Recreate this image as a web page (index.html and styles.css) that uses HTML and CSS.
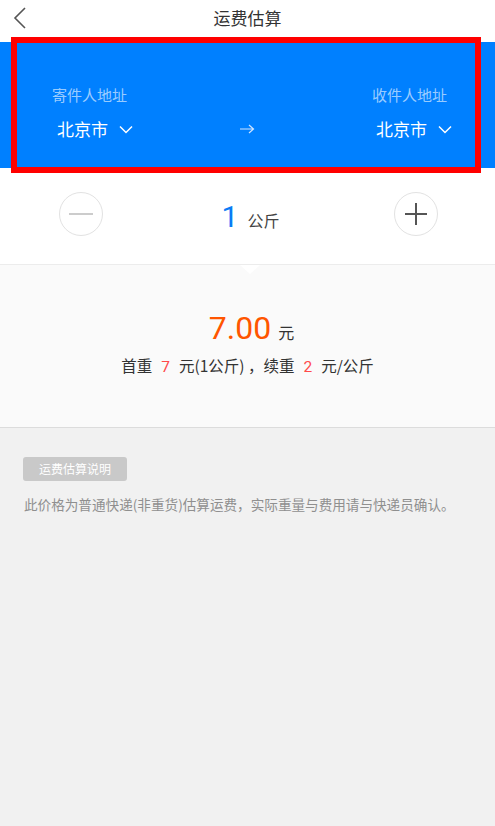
FILE: index.html
```html
<!DOCTYPE html>
<html lang="zh">
<head>
<meta charset="utf-8">
<link rel="stylesheet" href="styles.css">
</head>
<body>
<div class="page">
  <header class="topbar">
    <svg class="back" width="14" height="22" viewBox="0 0 14 22"><path d="M12 1 L2 11 L12 21" fill="none" stroke="#555" stroke-width="1.6"/></svg>
    <div class="title">运费估算</div>
  </header>
  <section class="route">
    <div class="route-inner">
      <div class="addr left">
        <div class="lbl">寄件人地址</div>
        <div class="city">北京市<svg class="chev" width="14" height="9" viewBox="0 0 14 9"><path d="M1 1.5 L7 7.5 L13 1.5" fill="none" stroke="#fff" stroke-width="1.5"/></svg></div>
      </div>
      <div class="arrow"><svg width="15" height="10" viewBox="0 0 15 10"><path d="M0 5 H13 M9 1 L13.5 5 L9 9" fill="none" stroke="#cfe4ff" stroke-width="1.2"/></svg></div>
      <div class="addr right">
        <div class="lbl">收件人地址</div>
        <div class="city">北京市<svg class="chev" width="14" height="9" viewBox="0 0 14 9"><path d="M1 1.5 L7 7.5 L13 1.5" fill="none" stroke="#fff" stroke-width="1.5"/></svg></div>
      </div>
    </div>
    <div class="highlight"></div>
  </section>
  <section class="weight">
    <div class="circle"><svg width="24" height="2" viewBox="0 0 24 2"><path d="M0 1 H24" stroke="#ccc" stroke-width="2"/></svg></div>
    <div class="qty"><span class="num">1</span><span class="unit">公斤</span></div>
    <div class="circle"><svg width="22" height="22" viewBox="0 0 22 22"><path d="M0 11 H22 M11 0 V22" stroke="#555" stroke-width="2"/></svg></div>
    <span class="notch"></span>
  </section>
  <section class="result">
    <div class="price"><span class="amt">7.00</span><span class="yuan">元</span></div>
    <div class="rule">首重<span class="red">7</span>元(1公斤) ，续重<span class="red">2</span>元/公斤</div>
  </section>
  <section class="note">
    <span class="badge">运费估算说明</span>
    <p class="desc">此价格为普通快递(非重货)估算运费，实际重量与费用请与快递员确认。</p>
  </section>
</div>
</body>
</html>
```
FILE: styles.css
```css
* { box-sizing: border-box; margin: 0; padding: 0; }
html, body { width: 495px; height: 826px; }
body {
  font-family: "Noto Sans CJK SC", "Roboto", "Liberation Sans", sans-serif;
  background: #f1f1f1;
  color: #333;
}
.page { width: 495px; min-height: 826px; display: flex; flex-direction: column; }
.topbar {
  height: 42px;
  background: #fff;
  display: flex;
  align-items: center;
  justify-content: center;
  position: relative;
}
.back { position: absolute; left: 13px; top: 7px; }
.title { font-size: 17px; color: #333; line-height: 1; margin-top: -7px; }
.route {
  height: 126px;
  background: #0080ff;
  position: relative;
  z-index: 2;
}
.route-inner {
  display: flex;
  justify-content: space-between;
  align-items: flex-start;
  padding: 44px 48px 0 52px;
}
.addr { display: flex; flex-direction: column; }
.addr.right { align-items: flex-end; }
.lbl { font-size: 15px; color: rgba(255,255,255,0.62); line-height: 18px; }
.city {
  margin-top: 15px;
  font-size: 17px;
  color: #fff;
  line-height: 20px;
  display: flex;
  align-items: center;
  padding-left: 5px;
}
.chev { margin-left: 11px; }
.addr.right .city { padding-left: 0; margin-right: -5px; }
.arrow { margin-top: 38px; margin-left: -10px; line-height: 0; }
.highlight {
  position: absolute;
  left: 11px; top: -5px;
  width: 470px; height: 136px;
  border: 6px solid #ff0000;
  pointer-events: none;
}
.weight {
  height: 97px;
  background: #fff;
  display: flex;
  align-items: center;
  justify-content: space-between;
  padding: 0 57px 0 59px;
  position: relative;
  border-bottom: 1px solid #ececec;
}
.circle {
  width: 44px; height: 44px;
  border: 1px solid #e2e2e2;
  border-radius: 50%;
  display: flex; align-items: center; justify-content: center;
  margin-top: -5px;
}
.qty { display: flex; align-items: baseline; margin-left: 4px; margin-top: 2px; }
.num { font-family: "Roboto", sans-serif; font-size: 30px; color: #0a7cf5; line-height: 1; }
.unit { font-size: 16px; color: #444; margin-left: 9px; }
.notch {
  position: absolute;
  left: 240px; bottom: -10px;
  width: 0; height: 0;
  border-left: 10px solid transparent;
  border-right: 10px solid transparent;
  border-top: 9px solid #fff;
}
.notch::before {
  content: "";
  position: absolute;
  left: -11px; top: -9px;
  border-left: 11px solid transparent;
  border-right: 11px solid transparent;
  border-top: 10px solid #ececec;
  z-index: -1;
}
.result {
  height: 163px;
  background: #fafafa;
  border-bottom: 1px solid #dcdcdc;
  display: flex;
  flex-direction: column;
  align-items: center;
  padding-top: 44px;
}
.price { display: flex; align-items: baseline; margin-left: 8px; }
.amt { font-family: "Roboto", sans-serif; font-size: 32px; color: #ff5500; line-height: 38px; }
.yuan { font-size: 16px; color: #333; margin-left: 7px; }
.rule { font-size: 15.5px; color: #333; margin-top: 6px; line-height: 24px; }
.red { color: #ff4a4a; font-family: "Roboto", sans-serif; margin: 0 9px; }
.note { padding: 27px 24px 0 23px; }
.badge {
  display: inline-block;
  background: #c9c9c9;
  color: #fff;
  font-size: 12px;
  line-height: 24px;
  height: 24px;
  padding: 0 16px;
  border-radius: 3px;
}
.desc { font-size: 13.6px; color: #8f8f8f; margin-top: 13px; line-height: 20px; padding-left: 1px; }
```
